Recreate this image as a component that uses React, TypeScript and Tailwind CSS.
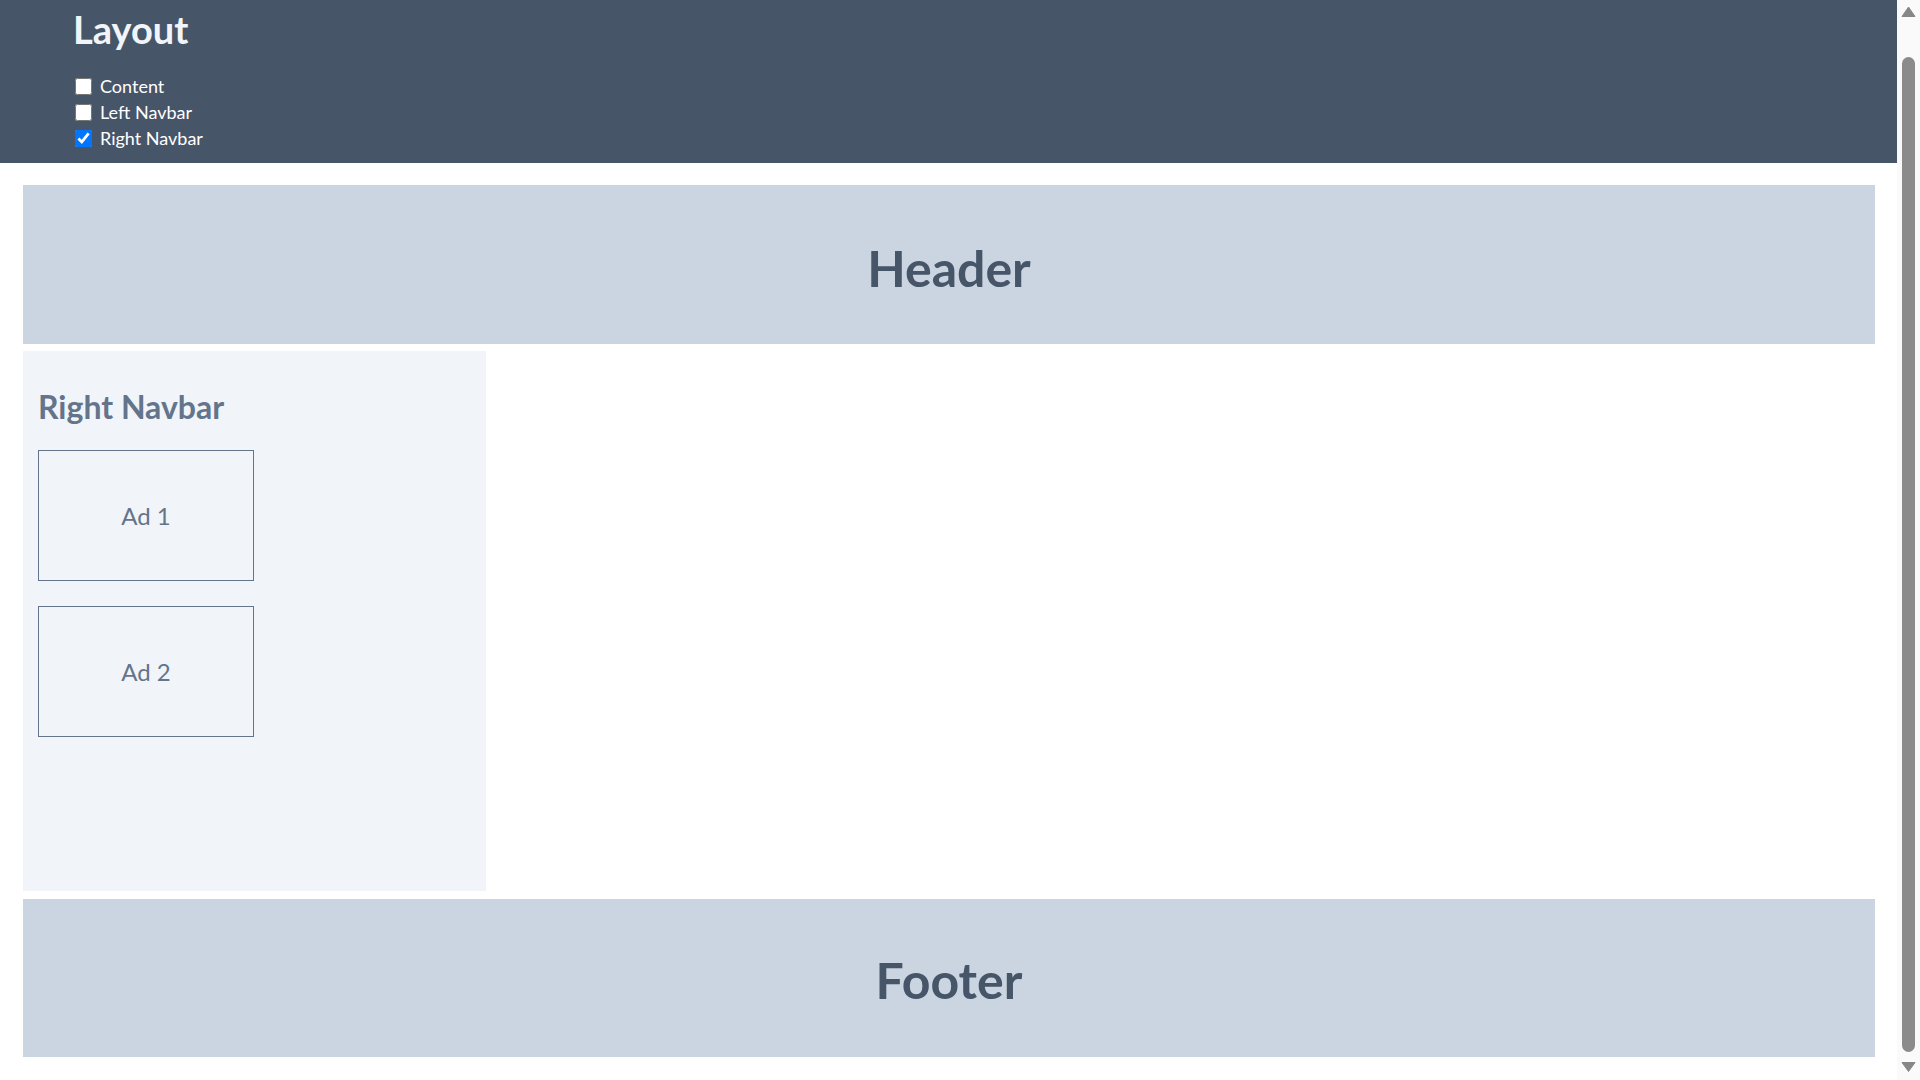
import React from "react";

const font = { fontFamily: 'Lato, "Open Sans", Arial, sans-serif' };

function Check({ label, checked }: { label: string; checked?: boolean }) {
  return (
    <label className="flex items-center h-[25.7px] text-[18px] leading-[25px] text-white">
      <input
        type="checkbox"
        defaultChecked={checked}
        className="ml-[2px] mr-[8px] w-[17px] h-[17px] m-0"
      />
      <span>{label}</span>
    </label>
  );
}

function Ad({ label }: { label: string }) {
  return (
    <div className="w-[216px] h-[131px] border border-[#64748b] flex items-center justify-center text-[24px] text-[#64748b]">
      {label}
    </div>
  );
}

function ScrollBar() {
  return (
    <div className="w-[23px] h-screen bg-[#fafafa] flex flex-col items-center shrink-0">
      <svg width="15" height="20" viewBox="0 0 15 20" className="shrink-0">
        <path d="M7.5 7 L14 16.5 L1 16.5 Z" fill="#878787" stroke="#878787" strokeWidth="1" strokeLinejoin="round" />
      </svg>
      <div className="mt-[37px] w-[13px] flex-1 rounded-full bg-[#8b8b8b]" />
      <svg width="15" height="28" viewBox="0 0 15 28" className="shrink-0">
        <path d="M1 10.5 L14 10.5 L7.5 19.5 Z" fill="#878787" stroke="#878787" strokeWidth="1" strokeLinejoin="round" />
      </svg>
    </div>
  );
}

export default function App() {
  return (
    <div style={font} className="h-screen overflow-hidden flex bg-white">
      <div className="flex-1 min-w-0">
        <div className="bg-[#475569] pl-[73px] pt-[1px] pb-[12px] text-white">
          <h1 className="text-[38px] font-bold leading-[56px] text-[#f1f5f9]">Layout</h1>
          <div className="mt-[17px] flex flex-col">
            <Check label="Content" />
            <Check label="Left Navbar" />
            <Check label="Right Navbar" checked />
          </div>
        </div>
        <div className="pl-[23px] pr-[22px] pt-[22px] pb-[23px] flex flex-col gap-[7px]">
          <header className="h-[159px] bg-[#cbd5e1] flex items-center justify-center pt-[7px]">
            <h2 className="text-[50px] font-bold text-[#475569]">Header</h2>
          </header>
          <div className="flex">
            <aside className="w-[463px] h-[540px] bg-[#f1f5f9] px-[15px] pt-[35px]">
              <h3 className="text-[32px] font-bold text-[#64748b] leading-[42px]">Right Navbar</h3>
              <div className="mt-[22px] flex flex-col gap-[25px]">
                <Ad label="Ad 1" />
                <Ad label="Ad 2" />
              </div>
            </aside>
          </div>
          <footer className="h-[158px] bg-[#cbd5e1] flex items-center justify-center mt-[1px] pt-[5px]">
            <h2 className="text-[50px] font-bold text-[#475569]">Footer</h2>
          </footer>
        </div>
      </div>
      <ScrollBar />
    </div>
  );
}
